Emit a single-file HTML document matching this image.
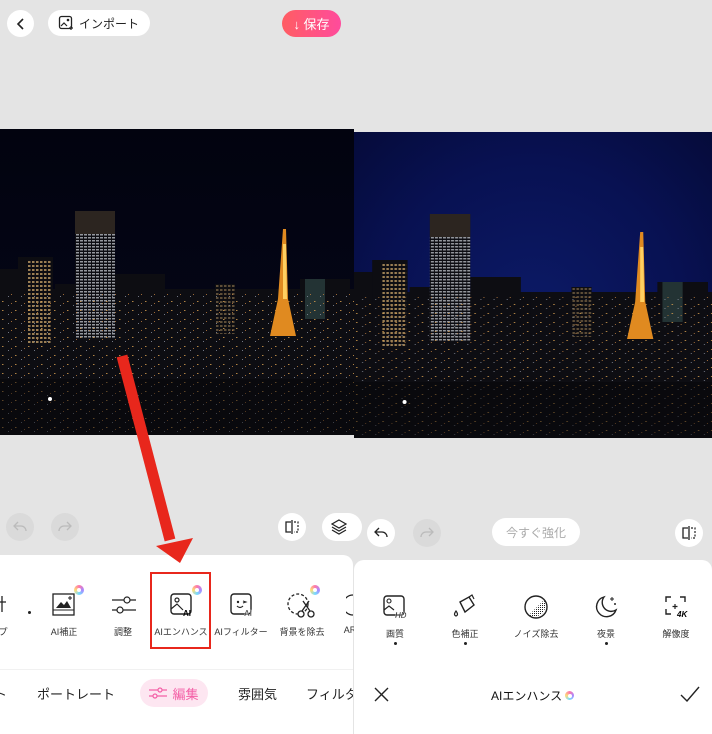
<!DOCTYPE html>
<html><head><meta charset="utf-8"><style>
*{margin:0;padding:0;box-sizing:border-box}
body{width:712px;height:734px;background:#e4e4e4;position:relative;overflow:hidden;font-family:"Liberation Sans","Noto Sans CJK JP",sans-serif;color:#222}
.a{position:absolute}
.circ{position:absolute;border-radius:50%;display:flex;align-items:center;justify-content:center}
.lbl{position:absolute;font-size:9px;color:#333;text-align:center;white-space:nowrap;transform:translateX(-50%)}
.ic{position:absolute}
.dot{position:absolute;width:3px;height:3px;border-radius:50%;background:#222}
.gem{position:absolute;width:10px;height:10px;border-radius:50%;background:conic-gradient(#f7a,#a8f,#7df,#fd7,#f7a)}
.gem::after{content:"";position:absolute;left:3px;top:3px;width:4px;height:4px;border-radius:50%;background:#fff}
</style></head><body>
<svg width="0" height="0" style="position:absolute">
<defs>
<pattern id="lights" width="13" height="9" patternUnits="userSpaceOnUse"><rect x="2" y="1" width="1.5" height="1" fill="#d9a050"/><rect x="8" y="5" width="1" height="1" fill="#8a90a0"/><rect x="11" y="3" width="1" height="1" fill="#c08040"/></pattern>
<pattern id="win" width="4" height="3" patternUnits="userSpaceOnUse"><rect width="3" height="1.5" fill="#cfd3da"/></pattern>
<pattern id="win2" width="4" height="4" patternUnits="userSpaceOnUse"><rect width="2.5" height="2" fill="#d8b070"/></pattern>
<symbol id="city" viewBox="0 0 354 306">
<g fill="#0d0d12">
<rect x="0" y="160" width="354" height="146"/>
<rect x="0" y="140" width="20" height="40"/>
<rect x="18" y="128" width="35" height="90"/>
<rect x="55" y="155" width="20" height="60"/>
<rect x="75" y="82" width="40" height="130"/>
<rect x="115" y="145" width="50" height="60"/>
<rect x="175" y="160" width="40" height="50"/>
<rect x="215" y="155" width="20" height="60"/>
<rect x="300" y="150" width="50" height="50"/>
</g>
<rect x="28" y="130" width="24" height="85" fill="url(#win2)" opacity=".7"/>
<rect x="75" y="105" width="40" height="105" fill="url(#win)" opacity=".7"/>
<rect x="75" y="82" width="40" height="23" fill="#3a3026" opacity=".7"/>
<rect x="215" y="155" width="20" height="50" fill="url(#win2)" opacity=".4"/>
<rect x="305" y="150" width="20" height="40" fill="#3a5a55" opacity=".5"/>
<rect x="0" y="165" width="354" height="141" fill="url(#lights)" opacity=".8"/>
<rect x="0" y="250" width="354" height="56" fill="#050507" opacity=".5"/>
<polygon points="283,100 286,100 288,170 296,207 270,207 278,170" fill="#e08a20"/>
<polygon points="283,115 286,115 287,170 283,170" fill="#ffd060"/>
<circle cx="50" cy="270" r="2" fill="#fff"/>
</symbol>
</defs></svg>

<!-- Left pane -->
<div class="circ" style="left:7px;top:10px;width:27px;height:27px;background:#fff"><svg width="14" height="14" viewBox="0 0 14 14"><path d="M9 2L4 7l5 5" fill="none" stroke="#222" stroke-width="1.6"/></svg></div>
<div class="a" style="left:48px;top:10px;width:102px;height:26px;background:#fff;border-radius:13px;font-size:12px;display:flex;align-items:center;padding-left:10px;gap:5px">
<svg width="16" height="16" viewBox="0 0 16 16"><rect x="1.5" y="1.5" width="12" height="12" rx="2" fill="none" stroke="#222" stroke-width="1.3"/><path d="M3 11l3-3 3 3" fill="none" stroke="#222" stroke-width="1.2"/><circle cx="10" cy="5" r="1.3" fill="#222"/><path d="M13 11v4M11 13h4" stroke="#222" stroke-width="1.2"/></svg>インポート</div>
<div class="a" style="left:282px;top:10px;width:59px;height:27px;border-radius:14px;background:linear-gradient(90deg,#ff5d63,#ff4b9c);color:#fff;font-size:13px;display:flex;align-items:center;justify-content:center">↓ 保存</div>

<div class="a" style="left:0;top:129px;width:354px;height:306px;background:linear-gradient(#02030f,#05071a)"><svg width="354" height="306"><use href="#city"/></svg></div>

<div class="circ" style="left:6px;top:513px;width:28px;height:28px;background:#dadada"><svg width="14" height="12" viewBox="0 0 14 12"><path d="M5 1L1 5l4 4M1 5h7a5 5 0 0 1 5 5" fill="none" stroke="#bbb" stroke-width="1.3"/></svg></div>
<div class="circ" style="left:51px;top:513px;width:28px;height:28px;background:#dadada"><svg width="14" height="12" viewBox="0 0 14 12"><path d="M9 1l4 4-4 4M13 5H6a5 5 0 0 0-5 5" fill="none" stroke="#bbb" stroke-width="1.3"/></svg></div>
<div class="circ" style="left:278px;top:513px;width:28px;height:28px;background:#fff"><svg width="16" height="14" viewBox="0 0 16 14"><path d="M7 2H2v10h5M8 0v14" fill="none" stroke="#222" stroke-width="1.3"/><path d="M10 2h4v10h-4" fill="none" stroke="#222" stroke-width="1.2" stroke-dasharray="2 1.5"/></svg></div>
<div class="a" style="left:322px;top:513px;width:40px;height:28px;border-radius:14px;background:#fff;padding:6px 0 0 9px"><svg width="16" height="16" viewBox="0 0 16 16"><path d="M8 1l7 4-7 4-7-4z M1 8l7 4 7-4 M1 11l7 4 7-4" fill="none" stroke="#222" stroke-width="1.2"/></svg></div>

<div class="a" style="left:0;top:555px;width:353px;height:179px;background:#fff;border-radius:0 10px 0 0"></div>
<div class="a" style="left:0;top:669px;width:353px;height:1px;background:#f1f1f1"></div>
<svg class="ic" style="left:0;top:594px" width="8" height="20"><path d="M2 2v16M0 8h6" stroke="#222" stroke-width="1.3"/></svg>
<div class="lbl" style="left:3px;top:625px">プ</div>
<div class="dot" style="left:28px;top:611px"></div>
<svg class="ic" style="left:52px;top:593px" width="24" height="24" viewBox="0 0 24 24"><rect x="1" y="1" width="21" height="21" fill="none" stroke="#222" stroke-width="1.3"/><path d="M1 17h21" stroke="#222"/><path d="M4 15l5-6 3 3 3-4 4 7z" fill="#222"/><path d="M18 3v4M16 5h4" stroke="#222"/></svg>
<div class="gem" style="left:74px;top:585px"></div>
<div class="lbl" style="left:64px;top:625px">AI補正</div>
<svg class="ic" style="left:112px;top:595px" width="24" height="20" viewBox="0 0 24 20"><path d="M0 5h24M0 15h24" stroke="#222" stroke-width="1.2"/><circle cx="15" cy="5" r="3" fill="#fff" stroke="#222" stroke-width="1.2"/><circle cx="8" cy="15" r="3" fill="#fff" stroke="#222" stroke-width="1.2"/></svg>
<div class="lbl" style="left:123px;top:625px">調整</div>
<svg class="ic" style="left:170px;top:593px" width="24" height="24" viewBox="0 0 24 24"><rect x="1" y="1" width="20" height="20" rx="3" fill="none" stroke="#222" stroke-width="1.4"/><circle cx="7" cy="7" r="2" fill="none" stroke="#222" stroke-width="1.2"/><path d="M1 16l6-5 6 6" fill="none" stroke="#222" stroke-width="1.2"/><text x="13" y="23" font-size="8" font-weight="bold" font-family="Liberation Sans">AI</text></svg>
<div class="gem" style="left:192px;top:585px"></div>
<div class="lbl" style="left:181px;top:625px">AIエンハンス</div>
<svg class="ic" style="left:230px;top:593px" width="24" height="24" viewBox="0 0 24 24"><rect x="1" y="1" width="20" height="20" rx="3" fill="none" stroke="#222" stroke-width="1.4"/><circle cx="8" cy="9" r="1.2" fill="#222"/><path d="M13 8l3 1-3 1" fill="none" stroke="#222"/><path d="M7 13q3 3 6 0" fill="none" stroke="#222" stroke-width="1.2"/><text x="14" y="23" font-size="8" font-weight="bold" font-family="Liberation Sans" fill="#222" stroke="#fff" stroke-width=".3">AI</text></svg>
<div class="lbl" style="left:241px;top:625px">AIフィルター</div>
<svg class="ic" style="left:287px;top:593px" width="28" height="26" viewBox="0 0 28 26"><circle cx="11" cy="11" r="10" fill="none" stroke="#222" stroke-width="1.3" stroke-dasharray="3 2"/><circle cx="14" cy="21" r="3" fill="#fff" stroke="#222" stroke-width="1.3"/><circle cx="24" cy="21" r="3" fill="#fff" stroke="#222" stroke-width="1.3"/><path d="M15 18l7-10M23 18l-7-10" stroke="#222" stroke-width="1.3"/></svg>
<div class="gem" style="left:310px;top:585px"></div>
<div class="lbl" style="left:302px;top:625px">背景を除去</div>
<svg class="ic" style="left:346px;top:594px" width="8" height="22"><path d="M7 1a10 10 0 0 0 0 20" fill="none" stroke="#222" stroke-width="1.3"/></svg>
<div class="lbl" style="left:350px;top:625px">AR</div>
<div class="a" style="left:150px;top:572px;width:61px;height:77px;border:2px solid #e8271c"></div>
<div class="a" style="left:-6px;top:684px;font-size:13px">ト</div>
<div class="a" style="left:37px;top:684px;font-size:13px">ポートレート</div>
<div class="a" style="left:140px;top:679px;width:68px;height:28px;background:#fde6f1;border-radius:14px;color:#f45fa6;font-size:13px;display:flex;align-items:center;justify-content:center;gap:5px"><svg width="18" height="12" viewBox="0 0 18 12"><path d="M0 3h18M0 9h18" stroke="#f45fa6" stroke-width="1.3"/><circle cx="11" cy="3" r="2" fill="#fde6f1" stroke="#f45fa6" stroke-width="1.2"/><circle cx="6" cy="9" r="2" fill="#fde6f1" stroke="#f45fa6" stroke-width="1.2"/></svg>編集</div>
<div class="a" style="left:238px;top:684px;font-size:13px">雰囲気</div>
<div class="a" style="left:306px;top:684px;font-size:13px;white-space:nowrap;width:47px;overflow:hidden">フィルター</div>
<svg class="a" style="left:0;top:0" width="356" height="734"><path d="M122 356L170 540" stroke="#e8271c" stroke-width="11"/><polygon points="156,546 193,538 180,563" fill="#e8271c"/></svg>

<!-- Right pane -->
<div class="a" style="left:354px;top:132px;width:358px;height:306px;background:radial-gradient(ellipse at 50% 60%,#0c1a66,#081152 60%,#050b3a)"><svg width="358" height="306" viewBox="0 0 354 306" preserveAspectRatio="none"><use href="#city"/></svg></div>
<div class="circ" style="left:367px;top:519px;width:28px;height:28px;background:#fff"><svg width="14" height="12" viewBox="0 0 14 12"><path d="M5 1L1 5l4 4M1 5h7a5 5 0 0 1 5 5" fill="none" stroke="#222" stroke-width="1.3"/></svg></div>
<div class="circ" style="left:413px;top:519px;width:28px;height:28px;background:#dadada"><svg width="14" height="12" viewBox="0 0 14 12"><path d="M9 1l4 4-4 4M13 5H6a5 5 0 0 0-5 5" fill="none" stroke="#bbb" stroke-width="1.3"/></svg></div>
<div class="a" style="left:492px;top:518px;width:88px;height:28px;border-radius:14px;background:#fff;color:#aaa;font-size:12px;display:flex;align-items:center;justify-content:center">今すぐ強化</div>
<div class="circ" style="left:675px;top:519px;width:28px;height:28px;background:#fff"><svg width="16" height="14" viewBox="0 0 16 14"><path d="M7 2H2v10h5M8 0v14" fill="none" stroke="#222" stroke-width="1.3"/><path d="M10 2h4v10h-4" fill="none" stroke="#222" stroke-width="1.2" stroke-dasharray="2 1.5"/></svg></div>
<div class="a" style="left:354px;top:560px;width:358px;height:174px;background:#fff;border-radius:10px 10px 0 0"></div>
<svg class="ic" style="left:383px;top:595px" width="26" height="24" viewBox="0 0 26 24"><rect x="1" y="1" width="20" height="19" rx="3" fill="none" stroke="#222" stroke-width="1.4"/><circle cx="6" cy="6" r="2" fill="none" stroke="#222" stroke-width="1.1"/><path d="M1 15l5-4 5 4" fill="none" stroke="#222" stroke-width="1.2"/><text x="12" y="23" font-size="8" font-weight="bold" font-style="italic" font-family="Liberation Sans" fill="#222" stroke="#fff" stroke-width=".3">HD</text></svg>
<div class="lbl" style="left:395px;top:627px">画質</div><div class="dot" style="left:394px;top:642px"></div>
<svg class="ic" style="left:452px;top:594px" width="26" height="26" viewBox="0 0 26 26"><path d="M8 8l9-5 5 8-9 7z" fill="none" stroke="#222" stroke-width="1.4"/><path d="M17 3l3-2 2 4" fill="none" stroke="#222" stroke-width="1.2"/><path d="M4 17q-3 4 0 5q3-1 0-5z" fill="none" stroke="#222" stroke-width="1.2"/></svg>
<div class="lbl" style="left:465px;top:627px">色補正</div><div class="dot" style="left:464px;top:642px"></div>
<svg class="ic" style="left:524px;top:595px" width="24" height="24" viewBox="0 0 24 24"><defs><pattern id="p" width="2" height="2" patternUnits="userSpaceOnUse"><rect width="1" height="1" fill="#222"/></pattern></defs><circle cx="12" cy="12" r="11" fill="none" stroke="#222" stroke-width="1.4"/><path d="M20 5A11 11 0 0 1 5 20z" fill="url(#p)"/></svg>
<div class="lbl" style="left:536px;top:627px">ノイズ除去</div>
<svg class="ic" style="left:594px;top:594px" width="26" height="26" viewBox="0 0 26 26"><path d="M10 3a10 10 0 1 0 12 13A9 9 0 0 1 10 3z" fill="none" stroke="#222" stroke-width="1.4"/><path d="M18 3v4M16 5h4M21 9v2M20 10h2" stroke="#222"/></svg>
<div class="lbl" style="left:606px;top:627px">夜景</div><div class="dot" style="left:605px;top:642px"></div>
<svg class="ic" style="left:665px;top:596px" width="26" height="22" viewBox="0 0 26 22"><path d="M1 6V1h5M15 1h5v5M1 13v5h5" fill="none" stroke="#222" stroke-width="1.4"/><path d="M10 8v5M7.5 10.5h5" stroke="#222" stroke-width="1.2"/><text x="12" y="21" font-size="8" font-weight="bold" font-style="italic" font-family="Liberation Sans">4K</text></svg>
<div class="lbl" style="left:676px;top:627px">解像度</div>
<svg class="ic" style="left:374px;top:687px" width="15" height="15"><path d="M1 1l13 13M14 1L1 14" stroke="#222" stroke-width="1.4"/></svg>
<div class="a" style="left:491px;top:687px;font-size:12px;color:#111;display:flex;align-items:center;gap:3px">AIエンハンス<span class="gem" style="position:relative;display:inline-block;width:9px;height:9px"></span></div>
<svg class="ic" style="left:680px;top:686px" width="20" height="16"><path d="M1 9l6 6L19 1" fill="none" stroke="#222" stroke-width="1.4"/></svg>
</body></html>
